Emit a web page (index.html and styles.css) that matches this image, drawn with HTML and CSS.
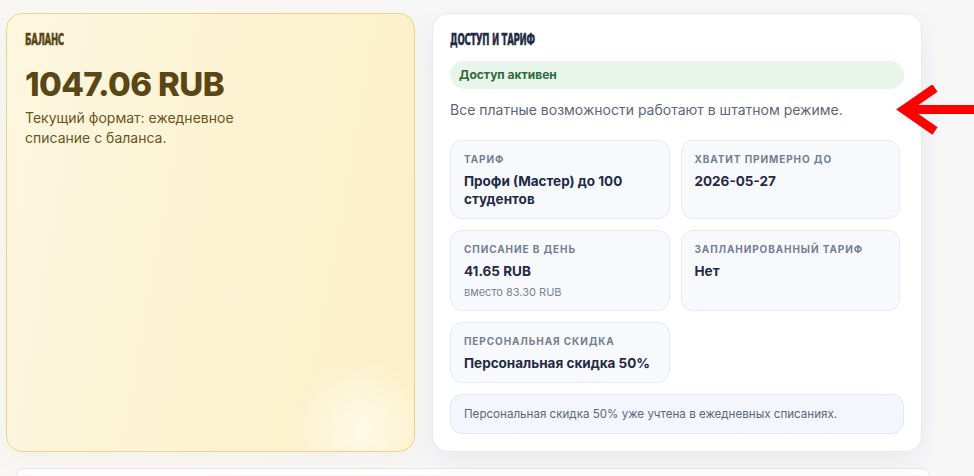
FILE: index.html
```html
<!DOCTYPE html>
<html lang="ru">
<head>
<meta charset="utf-8">
<title>Баланс и тариф</title>
<link rel="stylesheet" href="styles.css">
</head>
<body>
<div class="page">
  <div class="cards">
    <section class="card balance">
      <h2 class="card-title balance-title"><span class="title-text">Баланс</span></h2>
      <div class="balance-amount">1047.06 RUB</div>
      <p class="balance-desc">Текущий формат: ежедневное списание с баланса.</p>
    </section>
    <section class="card access">
      <h2 class="card-title access-title"><span class="title-text">Доступ и тариф</span></h2>
      <div class="status-pill">Доступ активен</div>
      <p class="access-desc">Все платные возможности работают в штатном режиме.</p>
      <div class="tiles">
        <div class="tile">
          <div class="tile-label">Тариф</div>
          <div class="tile-value">Профи (Мастер) до 100 студентов</div>
        </div>
        <div class="tile">
          <div class="tile-label">Хватит примерно до</div>
          <div class="tile-value">2026-05-27</div>
        </div>
        <div class="tile">
          <div class="tile-label">Списание в день</div>
          <div class="tile-value">41.65 RUB</div>
          <div class="tile-sub">вместо 83.30 RUB</div>
        </div>
        <div class="tile">
          <div class="tile-label">Запланированный тариф</div>
          <div class="tile-value">Нет</div>
        </div>
        <div class="tile">
          <div class="tile-label">Персональная скидка</div>
          <div class="tile-value">Персональная скидка 50%</div>
        </div>
      </div>
      <div class="note">Персональная скидка 50% уже учтена в ежедневных списаниях.</div>
    </section>
  </div>
  <div class="next-card"></div>
</div>
<svg class="annotation-arrow" width="78" height="50" viewBox="0 0 78 50" aria-hidden="true">
  <path d="M39 3 L8 24.5 L39 46" fill="none" stroke="#ff0000" stroke-width="9" stroke-linejoin="miter"/>
  <path d="M11 24.5 H78" fill="none" stroke="#ff0000" stroke-width="9"/>
</svg>
</body>
</html>
```

FILE: styles.css
```css
* { box-sizing: border-box; }

html, body {
  margin: 0;
  padding: 0;
}

body {
  width: 974px;
  height: 476px;
  overflow: hidden;
  font-family: Inter, "Noto Sans", "DejaVu Sans", sans-serif;
  background:
    radial-gradient(ellipse 360px 520px at 120px 260px, #fbf8ef 0%, rgba(251,248,239,0) 100%),
    #f7f7f8;
  position: relative;
}

.page {
  padding: 13px 0 0 6px;
}

.cards {
  display: grid;
  grid-template-columns: 409px 490px;
  column-gap: 17px;
  height: 438px;
}

.card {
  border-radius: 16px;
  margin: 0;
}

.card-title {
  margin: 0;
  padding-top: 12px;
  height: 34px;
  line-height: 18px;
  white-space: nowrap;
}

.title-text {
  display: inline-block;
  font-family: "DejaVu Sans Condensed", "DejaVu Sans", sans-serif;
  font-stretch: condensed;
  font-weight: 700;
  font-size: 16.5px;
  text-transform: uppercase;
  letter-spacing: -0.5px;
  transform: scaleX(0.58);
  transform-origin: left center;
  -webkit-text-stroke: 0.5px currentColor;
}

/* Balance card */
.balance {
  border: 1px solid #ecd38c;
  background:
    radial-gradient(circle 70px at 355px 415px, rgba(255,251,236,0.9) 0%, rgba(255,251,236,0) 100%),
    linear-gradient(100deg, #fdf7e0 0%, #fcf2d0 60%, #fcf0c8 100%);
  box-shadow: 0 8px 24px rgba(150, 120, 40, 0.05);
  padding: 2px 18px 18px 18px;
}

.balance-title {
  color: #5a4515;
}

.balance-amount {
  margin-top: 14px;
  font-size: 33px;
  line-height: 40px;
  font-weight: 800;
  color: #5b4716;
  letter-spacing: -0.6px;
}

.balance-desc {
  margin: 4px 0 0;
  max-width: 230px;
  font-size: 14px;
  line-height: 20px;
  color: #6a5421;
}

/* Access card */
.access {
  background: #ffffff;
  border: 1px solid #e6e9ef;
  box-shadow: 0 10px 28px rgba(30, 40, 70, 0.06);
  padding: 2px 17px 17px 17px;
}

.access-title {
  color: #1f2b45;
}

.status-pill {
  margin-top: 11px;
  height: 28px;
  border-radius: 14px;
  background: #e8f5ea;
  color: #2f6b3a;
  font-weight: 700;
  font-size: 12px;
  line-height: 28px;
  padding: 0 9px;
}

.access-desc {
  margin: 10px 0 0;
  font-size: 14px;
  line-height: 21px;
  color: #5d6679;
}

.tiles {
  margin-top: 20px;
  margin-right: 4px;
  display: grid;
  grid-template-columns: 1fr 1fr;
  gap: 11px;
}

.tile {
  background: #f7f9fd;
  border: 1px solid #e6eaf3;
  border-radius: 12px;
  padding: 11px 13px 10px;
}

.tile-label {
  font-size: 10px;
  line-height: 14px;
  font-weight: 700;
  letter-spacing: 0.9px;
  text-transform: uppercase;
  color: #747e92;
}

.tile-value {
  margin-top: 6px;
  font-size: 13.5px;
  line-height: 18px;
  font-weight: 700;
  color: #1f2b45;
}

.tile-sub {
  margin-top: 4px;
  font-size: 11px;
  line-height: 16px;
  color: #7b8496;
}

.note {
  margin-top: 11px;
  height: 40px;
  border-radius: 12px;
  background: #f3f6fd;
  border: 1px solid #e3e8f5;
  font-size: 11.6px;
  line-height: 38px;
  color: #5d6679;
  padding: 0 13px;
}

.next-card {
  margin: 17px 44px 0 10px;
  height: 7px;
  background: #ffffff;
  border: 1px solid #e5e7eb;
  border-bottom: none;
  border-radius: 16px 16px 0 0;
}

.annotation-arrow {
  position: absolute;
  left: 896px;
  top: 85px;
}
```
